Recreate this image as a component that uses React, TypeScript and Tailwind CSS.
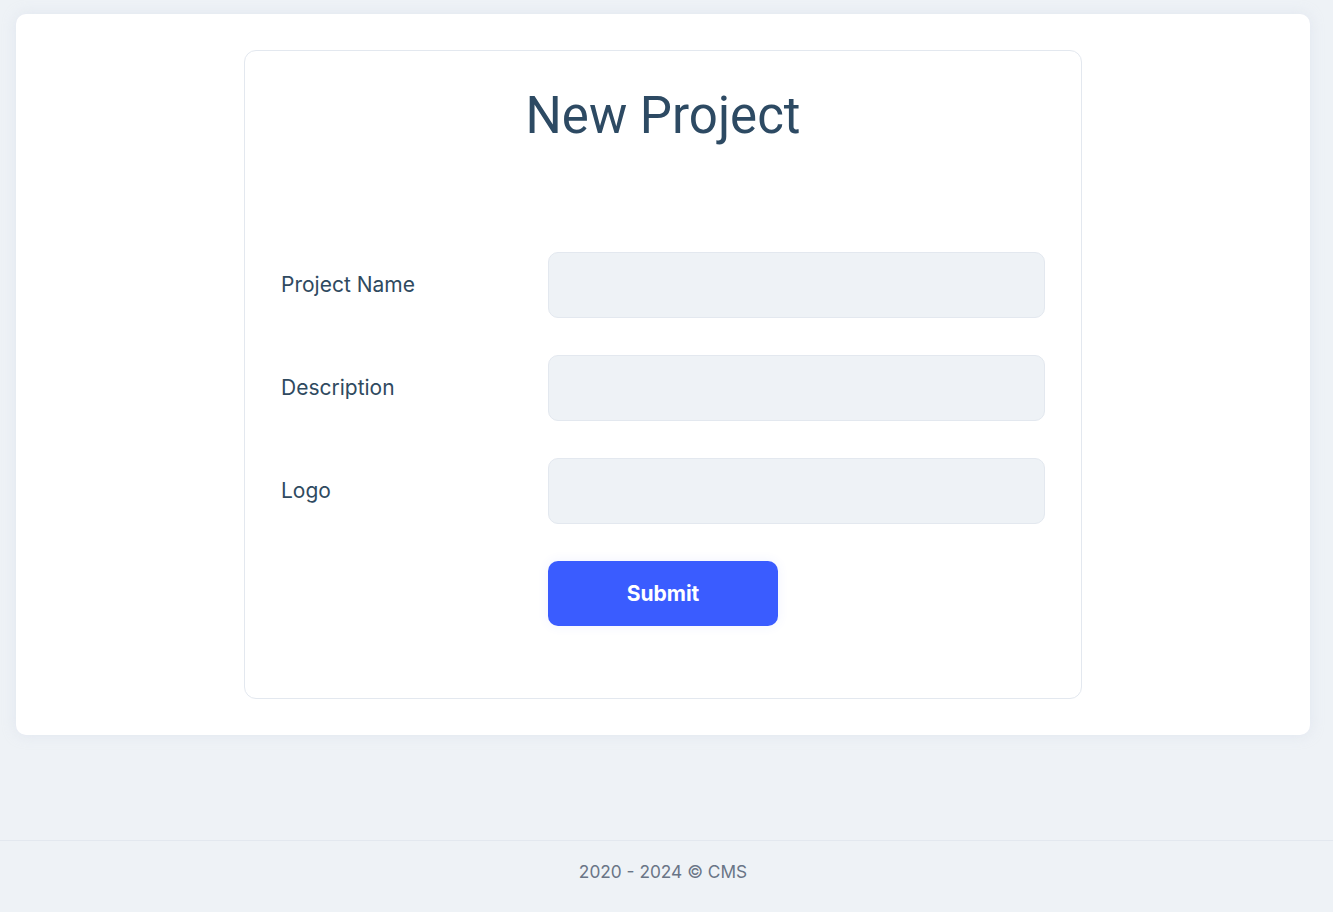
export default function App() {
  const fields = ["Project Name", "Description", "Logo"];

  return (
    <div className="flex min-h-[912px] flex-col bg-[#eef2f6] font-['Inter',sans-serif]">
      <main className="flex-1 pt-[14px] pl-4 pr-[23px]">
        <div className="rounded-[10px] bg-white py-9 shadow-[0_0_14px_rgba(200,210,225,0.35)]">
          <div className="mx-auto w-[838px] rounded-[12px] border border-[#e3e8ef] px-9 pt-[36px] pb-[72px]">
            <h1 className="text-center font-['Roboto',sans-serif] text-[51px] leading-[58px] text-[#2d4a63]">
              New Project
            </h1>

            <form className="mt-[107px] flex flex-col gap-[37px]">
              {fields.map((label) => (
                <div key={label} className="flex items-center">
                  <label className="w-[267px] text-[21px] font-normal text-[#2f4a5f]">{label}</label>
                  <input
                    type="text"
                    className="h-[66px] w-[497px] rounded-[10px] border border-[#e3e8ef] bg-[#eef2f6] px-4 outline-none"
                  />
                </div>
              ))}
              <div className="flex pl-[267px]">
                <button
                  type="button"
                  className="h-[65px] w-[230px] rounded-[10px] bg-[#3a5cff] text-[21px] font-bold text-white shadow-[0_0_12px_rgba(58,92,255,0.08)]"
                >
                  Submit
                </button>
              </div>
            </form>
          </div>
        </div>
      </main>

      <footer className="border-t border-[#e3e8ef] pt-[18px] pb-[27px] pl-4 pr-[23px] text-center text-[17.3px] leading-[26px] text-[#697586]">
        2020 - 2024 © CMS
      </footer>
    </div>
  );
}
